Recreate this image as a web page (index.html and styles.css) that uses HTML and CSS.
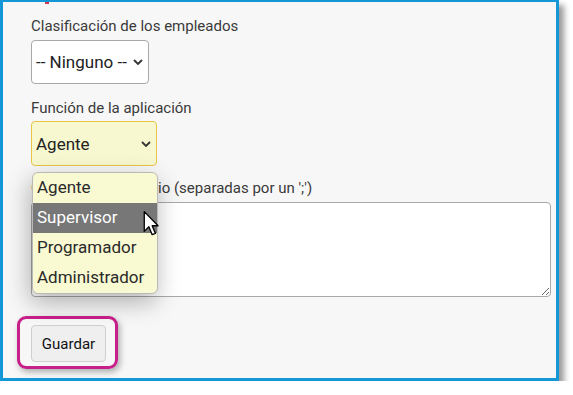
FILE: index.html
```html
<!DOCTYPE html>
<html>
<head>
  <meta charset="utf-8">
  <title>Usuario</title>
  <link rel="stylesheet" href="styles.css">
</head>
<body>
<div class=frame>
  <div class=cut></div>
  <label class=lbl>Clasificación de los empleados</label>
  <div class="sel narrow">
    <span>-- Ninguno --</span>
    <svg class=chev width="10" height="6" viewBox="0 0 10 6"><path d="M1 1 L5 5 L9 1" fill="none" stroke="#333" stroke-width="1.8"/></svg>
  </div>
  <label class="lbl l2">Función de la aplicación</label>
  <div class="sel role">
    <span>Agente</span>
    <svg class=chev width="10" height="6" viewBox="0 0 10 6"><path d="M1 1 L5 5 L9 1" fill="none" stroke="#333" stroke-width="1.8"/></svg>
    <!-- open option list -->
    <ul class=opts>
      <li>Agente</li>
      <li class=hov>Supervisor</li>
      <li>Programador</li>
      <li>Administrador</li>
      <svg class=cursor width="17" height="25" viewBox="0 0 12 19"><path d="M0.5 0.5 L0.5 15.5 L4 12 L6.5 18 L9 17 L6.5 11.2 L11 11.2 Z" fill="#fff" stroke="#000" stroke-width="1" stroke-linejoin="round"/></svg>
    </ul>
  </div>
  <label class="lbl l3">Grupos del directorio (separadas por un ';')</label>
  <textarea class=txt></textarea>
  <div class=ring><button class=btn>Guardar</button></div>
</div>
</body>
</html>
```
FILE: styles.css
```css
body {margin:0; background:#fff; font-family:Roboto, "Liberation Sans", sans-serif;}
.frame {box-sizing:border-box; width:559px; height:381px; background:#f7f7f7; border:3px solid #1497d6; border-top-width:2px; padding-left:28px; box-shadow:5px 5px 6px rgba(0,0,0,.4); overflow:hidden;}
.cut {width:4px; height:2px; margin-left:14px; background:#d8364e;}
.lbl {display:block; margin-top:12px; font-size:15px; line-height:20px; color:#3a3a3a;}
.l2 {margin-top:14px;}
.l3 {margin-top:12px;}
.sel {position:relative; box-sizing:border-box; display:flex; align-items:center; margin-top:4px; height:44px; padding-left:4px; background:#fff; border:1px solid #a9a9a9; border-radius:4px; font-size:17px; color:#222;}
.narrow {width:118px;}
.role {width:126px; height:45px; margin-top:3px; background:#f8f8d0; border-color:#e8c547;}
.chev {position:absolute; right:5px; top:50%; margin-top:-3px;}
.opts {position:absolute; left:0; top:50px; width:124px; margin:0; padding:0; list-style:none; background:#f9f9d2; border:1px solid #b9b9b9; border-radius:6px; box-shadow:-2px 8px 24px rgba(0,0,0,.3); z-index:2;}
.opts li {height:30px; line-height:29px; padding-left:4px; font-size:17px; color:#2a2a2a;}
.opts li.hov {background:#777; color:#fff;}
.cursor {position:absolute; left:110px; top:38px;}
.txt {display:block; box-sizing:border-box; width:520px; height:95px; margin-top:4px; background:#fff; border:1px solid #a9a9a9; border-radius:4px; resize:both;}
.ring {display:inline-block; margin:19px 0 0 -14px; padding:6px 9px 4px 11px; border:3px solid #c8208a; border-radius:9px; box-shadow:2px 3px 6px rgba(0,0,0,.3);}
.btn {display:block; width:75px; height:37px; background:#efefef; border:1px solid #cfcfcf; border-radius:4px; font-family:Roboto, sans-serif; font-size:15px; color:#111;}
```
